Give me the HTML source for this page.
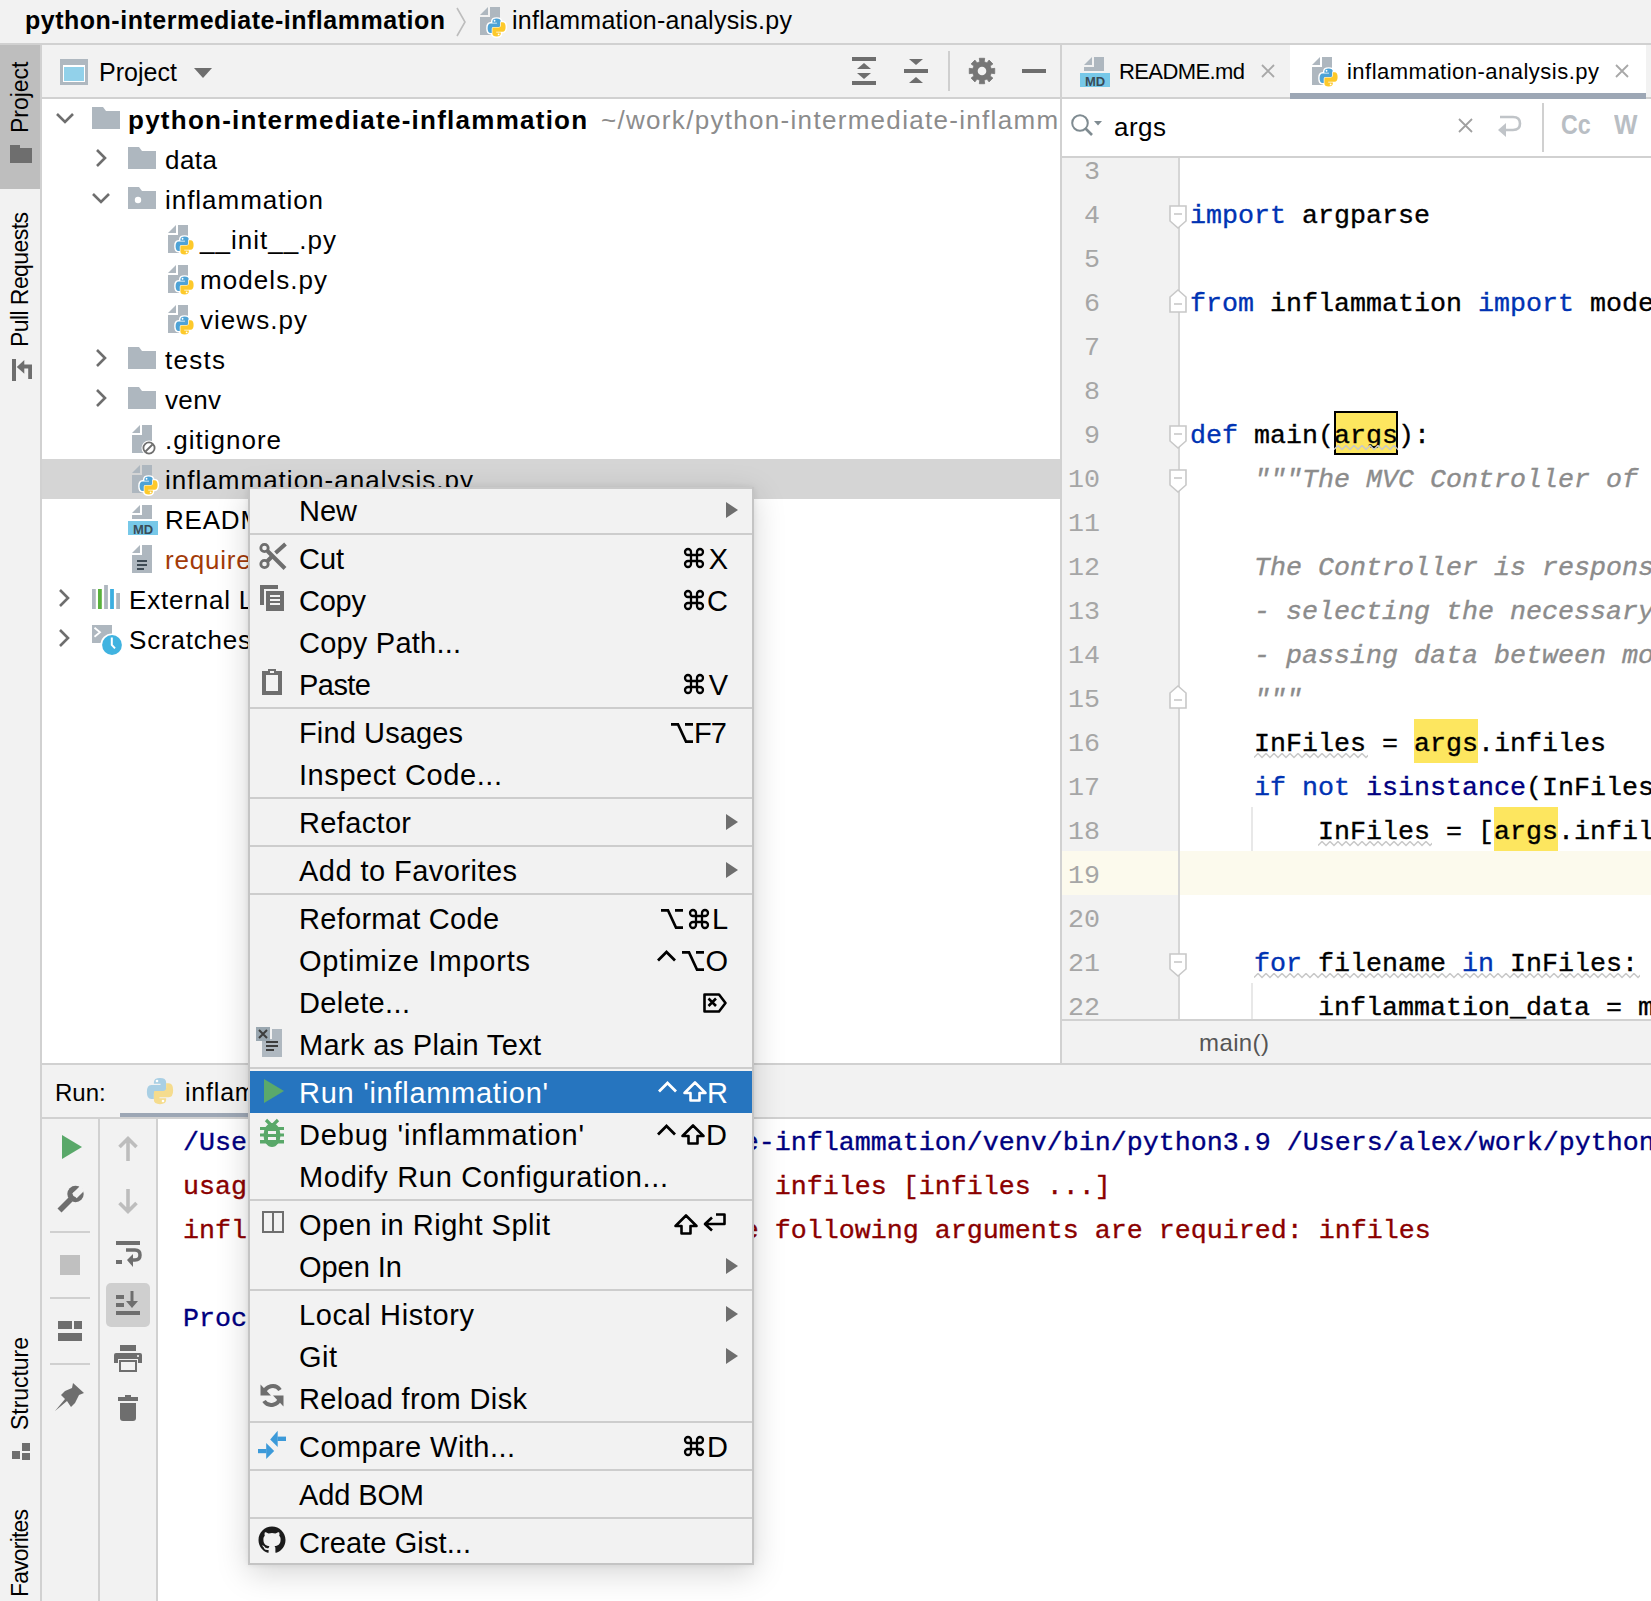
<!DOCTYPE html><html><head><meta charset="utf-8"><style>html,body{margin:0;padding:0;}body{width:1651px;height:1601px;overflow:hidden;position:relative;background:#F2F2F2;font-family:"Liberation Sans",sans-serif;}</style></head><body><div style="position:absolute;left:25px;top:7.84px;font-family:'Liberation Sans', sans-serif;font-size:25px;line-height:25px;color:#000;font-weight:bold;font-style:normal;letter-spacing:0.509px;white-space:pre;">python-intermediate-inflammation</div><svg style="position:absolute;left:455px;top:7px;overflow:visible;" width="12" height="30" viewBox="0 0 12 30"><path d="M2 1L10 15L2 29" fill="none" stroke="#BDBDBD" stroke-width="1.6"/></svg><svg style="position:absolute;left:480px;top:7px;overflow:visible;" width="28" height="31" viewBox="0 0 28 31"><path d="M10 0H20V28H0V10H10Z" fill="#AEB7BF"/><path d="M0 8L8 0V8Z" fill="#AEB7BF"/><g transform="translate(7,11) scale(1.2)"><path d="M4.5 3Q4.5 0.5 8 0.5Q11.5 0.5 11.5 3V7.2Q11.5 8 10.7 8H6.3Q4.5 8 4.5 9.8V12.5H3Q0.5 12.5 0.5 8.5Q0.5 4.5 3 4.5H8.3V3.9H4.5Z" fill="#fff" stroke="#fff" stroke-width="2.4" stroke-linejoin="round"/><path d="M4.5 3Q4.5 0.5 8 0.5Q11.5 0.5 11.5 3V7.2Q11.5 8 10.7 8H6.3Q4.5 8 4.5 9.8V12.5H3Q0.5 12.5 0.5 8.5Q0.5 4.5 3 4.5H8.3V3.9H4.5Z" transform="rotate(180 8 8)" fill="#fff" stroke="#fff" stroke-width="2.4" stroke-linejoin="round"/><path d="M4.5 3Q4.5 0.5 8 0.5Q11.5 0.5 11.5 3V7.2Q11.5 8 10.7 8H6.3Q4.5 8 4.5 9.8V12.5H3Q0.5 12.5 0.5 8.5Q0.5 4.5 3 4.5H8.3V3.9H4.5Z" fill="#4EA3D6"/><path d="M4.5 3Q4.5 0.5 8 0.5Q11.5 0.5 11.5 3V7.2Q11.5 8 10.7 8H6.3Q4.5 8 4.5 9.8V12.5H3Q0.5 12.5 0.5 8.5Q0.5 4.5 3 4.5H8.3V3.9H4.5Z" transform="rotate(180 8 8)" fill="#fff" stroke="#fff" stroke-width="1.1"/><path d="M4.5 3Q4.5 0.5 8 0.5Q11.5 0.5 11.5 3V7.2Q11.5 8 10.7 8H6.3Q4.5 8 4.5 9.8V12.5H3Q0.5 12.5 0.5 8.5Q0.5 4.5 3 4.5H8.3V3.9H4.5Z" transform="rotate(180 8 8)" fill="#FDC92A"/><circle cx="6.3" cy="2.3" r="0.75" fill="#fff"/><circle cx="9.7" cy="13.7" r="0.75" fill="#fff"/></g></svg><div style="position:absolute;left:512px;top:7.84px;font-family:'Liberation Sans', sans-serif;font-size:25px;line-height:25px;color:#000;font-weight:normal;font-style:normal;letter-spacing:0.272px;white-space:pre;">inflammation-analysis.py</div><div style="position:absolute;left:0px;top:43px;width:1651px;height:2px;background:#D1D1D1;"></div><div style="position:absolute;left:40px;top:45px;width:2px;height:1556px;background:#D1D1D1;"></div><div style="position:absolute;left:0px;top:45px;width:40px;height:144px;background:#BEBEBE;"></div><div style="position:absolute;left:9.03px;top:132.5px;transform-origin:0 0;transform:rotate(-90deg);font-family:'Liberation Sans', sans-serif;font-size:23px;line-height:23px;color:#000;letter-spacing:-0.016px;white-space:pre;">Project</div><svg style="position:absolute;left:10px;top:145px;overflow:visible;" width="22" height="18" viewBox="0 0 22 18"><path d="M0 0H10V3H22V18H0Z" fill="#6E6E6E"/></svg><div style="position:absolute;left:9.03px;top:347px;transform-origin:0 0;transform:rotate(-90deg);font-family:'Liberation Sans', sans-serif;font-size:23px;line-height:23px;color:#000;letter-spacing:-0.578px;white-space:pre;">Pull Requests</div><svg style="position:absolute;left:12px;top:359px;overflow:visible;" width="20" height="22" viewBox="0 0 20 22"><rect x="0" y="0" width="4" height="22" fill="#6E6E6E"/><path d="M4.8 8L12.3 1V5.5H20V20H16.2V9.5H12.3V14.7Z" fill="#6E6E6E"/></svg><div style="position:absolute;left:9.03px;top:1430px;transform-origin:0 0;transform:rotate(-90deg);font-family:'Liberation Sans', sans-serif;font-size:23px;line-height:23px;color:#000;letter-spacing:-0.041px;white-space:pre;">Structure</div><svg style="position:absolute;left:12px;top:1443px;overflow:visible;" width="18" height="17" viewBox="0 0 18 17"><rect x="0" y="8" width="8" height="8" fill="#6E6E6E"/><rect x="10" y="0" width="8" height="8" fill="#6E6E6E"/><rect x="10" y="10" width="8" height="7" fill="#6E6E6E"/></svg><div style="position:absolute;left:9.03px;top:1597px;transform-origin:0 0;transform:rotate(-90deg);font-family:'Liberation Sans', sans-serif;font-size:23px;line-height:23px;color:#000;letter-spacing:-0.824px;white-space:pre;">Favorites</div><div style="position:absolute;left:42px;top:45px;width:1018px;height:52px;background:#F2F2F2;"></div><svg style="position:absolute;left:60px;top:59px;overflow:visible;" width="28" height="26" viewBox="0 0 28 26"><rect x="0" y="0" width="28" height="26" fill="#AFB8C0"/><rect x="3" y="6" width="22" height="17" fill="#fff"/><rect x="4" y="8" width="20" height="14" fill="#92D1EA"/></svg><div style="position:absolute;left:99px;top:59.84px;font-family:'Liberation Sans', sans-serif;font-size:25px;line-height:25px;color:#000;font-weight:normal;font-style:normal;letter-spacing:0.031px;white-space:pre;">Project</div><svg style="position:absolute;left:193px;top:67px;overflow:visible;" width="20" height="12" viewBox="0 0 20 12"><path d="M1 1H19L10 11Z" fill="#6E6E6E"/></svg><svg style="position:absolute;left:852px;top:57px;overflow:visible;" width="24" height="28" viewBox="0 0 24 28"><rect x="0" y="0" width="24" height="4" fill="#6E6E6E"/><rect x="0" y="24" width="24" height="4" fill="#6E6E6E"/><path d="M5 12L12 6L19 12Z" fill="#6E6E6E"/><path d="M5 16L12 22L19 16Z" fill="#6E6E6E"/></svg><svg style="position:absolute;left:904px;top:59px;overflow:visible;" width="24" height="24" viewBox="0 0 24 24"><rect x="0" y="10" width="24" height="4" fill="#6E6E6E"/><path d="M5 0H19L12 6Z" fill="#6E6E6E"/><path d="M5 24H19L12 18Z" fill="#6E6E6E"/></svg><div style="position:absolute;left:948px;top:51px;width:2px;height:40px;background:#CFCFCF;"></div><svg style="position:absolute;left:970px;top:58px;overflow:visible;" width="24" height="26" viewBox="0 0 24 26"><path d="M24.72 10.30L24.72 15.70L21.24 15.22L20.10 17.96L22.90 20.08L19.08 23.90L16.96 21.10L14.22 22.24L14.70 25.72L9.30 25.72L9.78 22.24L7.04 21.10L4.92 23.90L1.10 20.08L3.90 17.96L2.76 15.22L-0.72 15.70L-0.72 10.30L2.76 10.78L3.90 8.04L1.10 5.92L4.92 2.10L7.04 4.90L9.78 3.76L9.30 0.28L14.70 0.28L14.22 3.76L16.96 4.90L19.08 2.10L22.90 5.92L20.10 8.04L21.24 10.78Z" fill="#767676" stroke="#767676" stroke-width="0.8" stroke-linejoin="round"/><circle cx="12" cy="13" r="4.3" fill="#F2F2F2"/></svg><div style="position:absolute;left:1022px;top:69px;width:24px;height:4px;background:#6E6E6E;"></div><div style="position:absolute;left:42px;top:97px;width:1018px;height:2px;background:#D1D1D1;"></div><div style="position:absolute;left:42px;top:99px;width:1018px;height:964px;background:#fff;"></div><div style="position:absolute;left:42px;top:459px;width:1018px;height:40px;background:#D5D5D5;"></div><svg style="position:absolute;left:56px;top:113px;overflow:visible;" width="18" height="10" viewBox="0 0 18 10"><path d="M1 1L9 9L17 1" fill="none" stroke="#6E6E6E" stroke-width="2.6"/></svg><svg style="position:absolute;left:92px;top:107px;overflow:visible;" width="28" height="22" viewBox="0 0 28 22"><path d="M0 0H11L14 4H28V22H0Z" fill="#AEB7BF"/></svg><div style="position:absolute;left:128px;top:106.99px;font-family:'Liberation Sans', sans-serif;font-size:26px;line-height:26px;color:#000;font-weight:bold;font-style:normal;letter-spacing:1.251px;white-space:pre;">python-intermediate-inflammation</div><div style="position:absolute;left:601px;top:106.99px;font-family:'Liberation Sans', sans-serif;font-size:26px;line-height:26px;color:#8C8C8C;font-weight:normal;font-style:normal;letter-spacing:1.306px;white-space:pre;">~/work/python-intermediate-inflammation</div><svg style="position:absolute;left:96px;top:149px;overflow:visible;" width="10" height="18" viewBox="0 0 10 18"><path d="M1 1L9 9L1 17" fill="none" stroke="#6E6E6E" stroke-width="2.6"/></svg><svg style="position:absolute;left:128px;top:147px;overflow:visible;" width="28" height="22" viewBox="0 0 28 22"><path d="M0 0H11L14 4H28V22H0Z" fill="#AEB7BF"/></svg><div style="position:absolute;left:165px;top:146.99px;font-family:'Liberation Sans', sans-serif;font-size:26px;line-height:26px;color:#000;font-weight:normal;font-style:normal;letter-spacing:0.474px;white-space:pre;">data</div><svg style="position:absolute;left:92px;top:193px;overflow:visible;" width="18" height="10" viewBox="0 0 18 10"><path d="M1 1L9 9L17 1" fill="none" stroke="#6E6E6E" stroke-width="2.6"/></svg><svg style="position:absolute;left:128px;top:187px;overflow:visible;" width="28" height="22" viewBox="0 0 28 22"><path d="M0 0H11L14 4H28V22H0Z" fill="#AEB7BF"/><circle cx="10" cy="13" r="3.2" fill="#fff"/></svg><div style="position:absolute;left:165px;top:186.99px;font-family:'Liberation Sans', sans-serif;font-size:26px;line-height:26px;color:#000;font-weight:normal;font-style:normal;letter-spacing:0.967px;white-space:pre;">inflammation</div><svg style="position:absolute;left:168px;top:225px;overflow:visible;" width="28" height="31" viewBox="0 0 28 31"><path d="M10 0H20V28H0V10H10Z" fill="#AEB7BF"/><path d="M0 8L8 0V8Z" fill="#AEB7BF"/><g transform="translate(7,11) scale(1.2)"><path d="M4.5 3Q4.5 0.5 8 0.5Q11.5 0.5 11.5 3V7.2Q11.5 8 10.7 8H6.3Q4.5 8 4.5 9.8V12.5H3Q0.5 12.5 0.5 8.5Q0.5 4.5 3 4.5H8.3V3.9H4.5Z" fill="#fff" stroke="#fff" stroke-width="2.4" stroke-linejoin="round"/><path d="M4.5 3Q4.5 0.5 8 0.5Q11.5 0.5 11.5 3V7.2Q11.5 8 10.7 8H6.3Q4.5 8 4.5 9.8V12.5H3Q0.5 12.5 0.5 8.5Q0.5 4.5 3 4.5H8.3V3.9H4.5Z" transform="rotate(180 8 8)" fill="#fff" stroke="#fff" stroke-width="2.4" stroke-linejoin="round"/><path d="M4.5 3Q4.5 0.5 8 0.5Q11.5 0.5 11.5 3V7.2Q11.5 8 10.7 8H6.3Q4.5 8 4.5 9.8V12.5H3Q0.5 12.5 0.5 8.5Q0.5 4.5 3 4.5H8.3V3.9H4.5Z" fill="#4EA3D6"/><path d="M4.5 3Q4.5 0.5 8 0.5Q11.5 0.5 11.5 3V7.2Q11.5 8 10.7 8H6.3Q4.5 8 4.5 9.8V12.5H3Q0.5 12.5 0.5 8.5Q0.5 4.5 3 4.5H8.3V3.9H4.5Z" transform="rotate(180 8 8)" fill="#fff" stroke="#fff" stroke-width="1.1"/><path d="M4.5 3Q4.5 0.5 8 0.5Q11.5 0.5 11.5 3V7.2Q11.5 8 10.7 8H6.3Q4.5 8 4.5 9.8V12.5H3Q0.5 12.5 0.5 8.5Q0.5 4.5 3 4.5H8.3V3.9H4.5Z" transform="rotate(180 8 8)" fill="#FDC92A"/><circle cx="6.3" cy="2.3" r="0.75" fill="#fff"/><circle cx="9.7" cy="13.7" r="0.75" fill="#fff"/></g></svg><div style="position:absolute;left:200px;top:226.99px;font-family:'Liberation Sans', sans-serif;font-size:26px;line-height:26px;color:#000;font-weight:normal;font-style:normal;letter-spacing:1.028px;white-space:pre;">__init__.py</div><svg style="position:absolute;left:168px;top:265px;overflow:visible;" width="28" height="31" viewBox="0 0 28 31"><path d="M10 0H20V28H0V10H10Z" fill="#AEB7BF"/><path d="M0 8L8 0V8Z" fill="#AEB7BF"/><g transform="translate(7,11) scale(1.2)"><path d="M4.5 3Q4.5 0.5 8 0.5Q11.5 0.5 11.5 3V7.2Q11.5 8 10.7 8H6.3Q4.5 8 4.5 9.8V12.5H3Q0.5 12.5 0.5 8.5Q0.5 4.5 3 4.5H8.3V3.9H4.5Z" fill="#fff" stroke="#fff" stroke-width="2.4" stroke-linejoin="round"/><path d="M4.5 3Q4.5 0.5 8 0.5Q11.5 0.5 11.5 3V7.2Q11.5 8 10.7 8H6.3Q4.5 8 4.5 9.8V12.5H3Q0.5 12.5 0.5 8.5Q0.5 4.5 3 4.5H8.3V3.9H4.5Z" transform="rotate(180 8 8)" fill="#fff" stroke="#fff" stroke-width="2.4" stroke-linejoin="round"/><path d="M4.5 3Q4.5 0.5 8 0.5Q11.5 0.5 11.5 3V7.2Q11.5 8 10.7 8H6.3Q4.5 8 4.5 9.8V12.5H3Q0.5 12.5 0.5 8.5Q0.5 4.5 3 4.5H8.3V3.9H4.5Z" fill="#4EA3D6"/><path d="M4.5 3Q4.5 0.5 8 0.5Q11.5 0.5 11.5 3V7.2Q11.5 8 10.7 8H6.3Q4.5 8 4.5 9.8V12.5H3Q0.5 12.5 0.5 8.5Q0.5 4.5 3 4.5H8.3V3.9H4.5Z" transform="rotate(180 8 8)" fill="#fff" stroke="#fff" stroke-width="1.1"/><path d="M4.5 3Q4.5 0.5 8 0.5Q11.5 0.5 11.5 3V7.2Q11.5 8 10.7 8H6.3Q4.5 8 4.5 9.8V12.5H3Q0.5 12.5 0.5 8.5Q0.5 4.5 3 4.5H8.3V3.9H4.5Z" transform="rotate(180 8 8)" fill="#FDC92A"/><circle cx="6.3" cy="2.3" r="0.75" fill="#fff"/><circle cx="9.7" cy="13.7" r="0.75" fill="#fff"/></g></svg><div style="position:absolute;left:200px;top:266.99px;font-family:'Liberation Sans', sans-serif;font-size:26px;line-height:26px;color:#000;font-weight:normal;font-style:normal;letter-spacing:1.066px;white-space:pre;">models.py</div><svg style="position:absolute;left:168px;top:305px;overflow:visible;" width="28" height="31" viewBox="0 0 28 31"><path d="M10 0H20V28H0V10H10Z" fill="#AEB7BF"/><path d="M0 8L8 0V8Z" fill="#AEB7BF"/><g transform="translate(7,11) scale(1.2)"><path d="M4.5 3Q4.5 0.5 8 0.5Q11.5 0.5 11.5 3V7.2Q11.5 8 10.7 8H6.3Q4.5 8 4.5 9.8V12.5H3Q0.5 12.5 0.5 8.5Q0.5 4.5 3 4.5H8.3V3.9H4.5Z" fill="#fff" stroke="#fff" stroke-width="2.4" stroke-linejoin="round"/><path d="M4.5 3Q4.5 0.5 8 0.5Q11.5 0.5 11.5 3V7.2Q11.5 8 10.7 8H6.3Q4.5 8 4.5 9.8V12.5H3Q0.5 12.5 0.5 8.5Q0.5 4.5 3 4.5H8.3V3.9H4.5Z" transform="rotate(180 8 8)" fill="#fff" stroke="#fff" stroke-width="2.4" stroke-linejoin="round"/><path d="M4.5 3Q4.5 0.5 8 0.5Q11.5 0.5 11.5 3V7.2Q11.5 8 10.7 8H6.3Q4.5 8 4.5 9.8V12.5H3Q0.5 12.5 0.5 8.5Q0.5 4.5 3 4.5H8.3V3.9H4.5Z" fill="#4EA3D6"/><path d="M4.5 3Q4.5 0.5 8 0.5Q11.5 0.5 11.5 3V7.2Q11.5 8 10.7 8H6.3Q4.5 8 4.5 9.8V12.5H3Q0.5 12.5 0.5 8.5Q0.5 4.5 3 4.5H8.3V3.9H4.5Z" transform="rotate(180 8 8)" fill="#fff" stroke="#fff" stroke-width="1.1"/><path d="M4.5 3Q4.5 0.5 8 0.5Q11.5 0.5 11.5 3V7.2Q11.5 8 10.7 8H6.3Q4.5 8 4.5 9.8V12.5H3Q0.5 12.5 0.5 8.5Q0.5 4.5 3 4.5H8.3V3.9H4.5Z" transform="rotate(180 8 8)" fill="#FDC92A"/><circle cx="6.3" cy="2.3" r="0.75" fill="#fff"/><circle cx="9.7" cy="13.7" r="0.75" fill="#fff"/></g></svg><div style="position:absolute;left:200px;top:306.99px;font-family:'Liberation Sans', sans-serif;font-size:26px;line-height:26px;color:#000;font-weight:normal;font-style:normal;letter-spacing:1.045px;white-space:pre;">views.py</div><svg style="position:absolute;left:96px;top:349px;overflow:visible;" width="10" height="18" viewBox="0 0 10 18"><path d="M1 1L9 9L1 17" fill="none" stroke="#6E6E6E" stroke-width="2.6"/></svg><svg style="position:absolute;left:128px;top:347px;overflow:visible;" width="28" height="22" viewBox="0 0 28 22"><path d="M0 0H11L14 4H28V22H0Z" fill="#AEB7BF"/></svg><div style="position:absolute;left:165px;top:346.99px;font-family:'Liberation Sans', sans-serif;font-size:26px;line-height:26px;color:#000;font-weight:normal;font-style:normal;letter-spacing:1.277px;white-space:pre;">tests</div><svg style="position:absolute;left:96px;top:389px;overflow:visible;" width="10" height="18" viewBox="0 0 10 18"><path d="M1 1L9 9L1 17" fill="none" stroke="#6E6E6E" stroke-width="2.6"/></svg><svg style="position:absolute;left:128px;top:387px;overflow:visible;" width="28" height="22" viewBox="0 0 28 22"><path d="M0 0H11L14 4H28V22H0Z" fill="#AEB7BF"/></svg><div style="position:absolute;left:165px;top:386.99px;font-family:'Liberation Sans', sans-serif;font-size:26px;line-height:26px;color:#000;font-weight:normal;font-style:normal;letter-spacing:0.365px;white-space:pre;">venv</div><svg style="position:absolute;left:132px;top:425px;overflow:visible;" width="26" height="32" viewBox="0 0 26 32"><path d="M10 0H20V28H0V10H10Z" fill="#AEB7BF"/><path d="M0 8L8 0V8Z" fill="#AEB7BF"/><circle cx="17" cy="23" r="7.5" fill="#fff"/><circle cx="17" cy="23" r="5.6" fill="none" stroke="#6E6E6E" stroke-width="1.8"/><path d="M13.5 26.5L20.5 19.5" stroke="#6E6E6E" stroke-width="1.8"/></svg><div style="position:absolute;left:165px;top:426.99px;font-family:'Liberation Sans', sans-serif;font-size:26px;line-height:26px;color:#000;font-weight:normal;font-style:normal;letter-spacing:1.009px;white-space:pre;">.gitignore</div><svg style="position:absolute;left:132px;top:465px;overflow:visible;" width="28" height="31" viewBox="0 0 28 31"><path d="M10 0H20V28H0V10H10Z" fill="#AEB7BF"/><path d="M0 8L8 0V8Z" fill="#AEB7BF"/><g transform="translate(7,11) scale(1.2)"><path d="M4.5 3Q4.5 0.5 8 0.5Q11.5 0.5 11.5 3V7.2Q11.5 8 10.7 8H6.3Q4.5 8 4.5 9.8V12.5H3Q0.5 12.5 0.5 8.5Q0.5 4.5 3 4.5H8.3V3.9H4.5Z" fill="#fff" stroke="#fff" stroke-width="2.4" stroke-linejoin="round"/><path d="M4.5 3Q4.5 0.5 8 0.5Q11.5 0.5 11.5 3V7.2Q11.5 8 10.7 8H6.3Q4.5 8 4.5 9.8V12.5H3Q0.5 12.5 0.5 8.5Q0.5 4.5 3 4.5H8.3V3.9H4.5Z" transform="rotate(180 8 8)" fill="#fff" stroke="#fff" stroke-width="2.4" stroke-linejoin="round"/><path d="M4.5 3Q4.5 0.5 8 0.5Q11.5 0.5 11.5 3V7.2Q11.5 8 10.7 8H6.3Q4.5 8 4.5 9.8V12.5H3Q0.5 12.5 0.5 8.5Q0.5 4.5 3 4.5H8.3V3.9H4.5Z" fill="#4EA3D6"/><path d="M4.5 3Q4.5 0.5 8 0.5Q11.5 0.5 11.5 3V7.2Q11.5 8 10.7 8H6.3Q4.5 8 4.5 9.8V12.5H3Q0.5 12.5 0.5 8.5Q0.5 4.5 3 4.5H8.3V3.9H4.5Z" transform="rotate(180 8 8)" fill="#fff" stroke="#fff" stroke-width="1.1"/><path d="M4.5 3Q4.5 0.5 8 0.5Q11.5 0.5 11.5 3V7.2Q11.5 8 10.7 8H6.3Q4.5 8 4.5 9.8V12.5H3Q0.5 12.5 0.5 8.5Q0.5 4.5 3 4.5H8.3V3.9H4.5Z" transform="rotate(180 8 8)" fill="#FDC92A"/><circle cx="6.3" cy="2.3" r="0.75" fill="#fff"/><circle cx="9.7" cy="13.7" r="0.75" fill="#fff"/></g></svg><div style="position:absolute;left:165px;top:466.99px;font-family:'Liberation Sans', sans-serif;font-size:26px;line-height:26px;color:#000;font-weight:normal;font-style:normal;letter-spacing:1.017px;white-space:pre;">inflammation-analysis.py</div><svg style="position:absolute;left:128px;top:505px;overflow:visible;" width="30" height="30" viewBox="0 0 30 30"><g transform="translate(4,0)"><path d="M10 0H20V14H0V10H10Z" fill="#AEB7BF"/><path d="M0 8L8 0V8Z" fill="#AEB7BF"/></g><rect x="0" y="16" width="30" height="14" fill="#77C8E8"/><text x="15" y="28.5" text-anchor="middle" font-family="Liberation Sans" font-weight="bold" font-size="13" fill="#3A4C58">MD</text></svg><div style="position:absolute;left:165px;top:506.99px;font-family:'Liberation Sans', sans-serif;font-size:26px;line-height:26px;color:#000;font-weight:normal;font-style:normal;letter-spacing:0.800px;white-space:pre;">README.md</div><svg style="position:absolute;left:132px;top:545px;overflow:visible;" width="20" height="28" viewBox="0 0 20 28"><path d="M10 0H20V28H0V10H10Z" fill="#AEB7BF"/><path d="M0 8L8 0V8Z" fill="#AEB7BF"/><rect x="5" y="15" width="10" height="2" fill="#3D4A54"/><rect x="5" y="19" width="10" height="2" fill="#3D4A54"/><rect x="5" y="23" width="7" height="2" fill="#3D4A54"/></svg><div style="position:absolute;left:165px;top:546.99px;font-family:'Liberation Sans', sans-serif;font-size:26px;line-height:26px;color:#A33B08;font-weight:normal;font-style:normal;letter-spacing:0.800px;white-space:pre;">requirements.txt</div><svg style="position:absolute;left:59px;top:589px;overflow:visible;" width="10" height="18" viewBox="0 0 10 18"><path d="M1 1L9 9L1 17" fill="none" stroke="#6E6E6E" stroke-width="2.6"/></svg><svg style="position:absolute;left:92px;top:585px;overflow:visible;" width="28" height="24" viewBox="0 0 28 24"><rect x="0" y="4" width="3.8" height="20" fill="#AEB7BF"/><rect x="6" y="4" width="3.8" height="20" fill="#59B13D"/><rect x="12.1" y="0" width="3.8" height="24" fill="#AEB7BF"/><rect x="18.1" y="4" width="3.8" height="20" fill="#3BAEE0"/><rect x="24.2" y="8" width="3.8" height="16" fill="#AEB7BF"/></svg><div style="position:absolute;left:129px;top:586.99px;font-family:'Liberation Sans', sans-serif;font-size:26px;line-height:26px;color:#000;font-weight:normal;font-style:normal;letter-spacing:0.800px;white-space:pre;">External Libraries</div><svg style="position:absolute;left:59px;top:629px;overflow:visible;" width="10" height="18" viewBox="0 0 10 18"><path d="M1 1L9 9L1 17" fill="none" stroke="#6E6E6E" stroke-width="2.6"/></svg><svg style="position:absolute;left:92px;top:625px;overflow:visible;" width="32" height="32" viewBox="0 0 32 32"><path d="M0 0H20V18H0Z" fill="#AEB7BF"/><path d="M2.5 2.8L8 7.3L2.5 11.8" fill="none" stroke="#fff" stroke-width="1.8"/><circle cx="20" cy="20" r="11.6" fill="#fff"/><circle cx="20" cy="20" r="9.9" fill="#40B3E0"/><path d="M19.8 12.5V19.8L23 23.3" fill="none" stroke="#fff" stroke-width="2"/></svg><div style="position:absolute;left:129px;top:626.99px;font-family:'Liberation Sans', sans-serif;font-size:26px;line-height:26px;color:#000;font-weight:normal;font-style:normal;letter-spacing:0.800px;white-space:pre;">Scratches and Consoles</div><div style="position:absolute;left:1060px;top:45px;width:2px;height:1018px;background:#D1D1D1;"></div><div style="position:absolute;left:1062px;top:45px;width:589px;height:52px;background:#F2F2F2;"></div><svg style="position:absolute;left:1080px;top:57px;overflow:visible;" width="30" height="30" viewBox="0 0 30 30"><g transform="translate(4,0)"><path d="M10 0H20V14H0V10H10Z" fill="#AEB7BF"/><path d="M0 8L8 0V8Z" fill="#AEB7BF"/></g><rect x="0" y="16" width="30" height="14" fill="#77C8E8"/><text x="15" y="28.5" text-anchor="middle" font-family="Liberation Sans" font-weight="bold" font-size="13" fill="#3A4C58">MD</text></svg><div style="position:absolute;left:1119px;top:60.88px;font-family:'Liberation Sans', sans-serif;font-size:22px;line-height:22px;color:#000;font-weight:normal;font-style:normal;letter-spacing:-0.600px;white-space:pre;">README.md</div><svg style="position:absolute;left:1261px;top:64px;overflow:visible;" width="14" height="14" viewBox="0 0 14 14"><path d="M1 1L13 13M13 1L1 13" stroke="#A8A8A8" stroke-width="1.8"/></svg><div style="position:absolute;left:1290px;top:45px;width:356px;height:54px;background:#fff;"></div><svg style="position:absolute;left:1312px;top:57px;overflow:visible;" width="28" height="31" viewBox="0 0 28 31"><path d="M10 0H20V28H0V10H10Z" fill="#AEB7BF"/><path d="M0 8L8 0V8Z" fill="#AEB7BF"/><g transform="translate(7,11) scale(1.2)"><path d="M4.5 3Q4.5 0.5 8 0.5Q11.5 0.5 11.5 3V7.2Q11.5 8 10.7 8H6.3Q4.5 8 4.5 9.8V12.5H3Q0.5 12.5 0.5 8.5Q0.5 4.5 3 4.5H8.3V3.9H4.5Z" fill="#fff" stroke="#fff" stroke-width="2.4" stroke-linejoin="round"/><path d="M4.5 3Q4.5 0.5 8 0.5Q11.5 0.5 11.5 3V7.2Q11.5 8 10.7 8H6.3Q4.5 8 4.5 9.8V12.5H3Q0.5 12.5 0.5 8.5Q0.5 4.5 3 4.5H8.3V3.9H4.5Z" transform="rotate(180 8 8)" fill="#fff" stroke="#fff" stroke-width="2.4" stroke-linejoin="round"/><path d="M4.5 3Q4.5 0.5 8 0.5Q11.5 0.5 11.5 3V7.2Q11.5 8 10.7 8H6.3Q4.5 8 4.5 9.8V12.5H3Q0.5 12.5 0.5 8.5Q0.5 4.5 3 4.5H8.3V3.9H4.5Z" fill="#4EA3D6"/><path d="M4.5 3Q4.5 0.5 8 0.5Q11.5 0.5 11.5 3V7.2Q11.5 8 10.7 8H6.3Q4.5 8 4.5 9.8V12.5H3Q0.5 12.5 0.5 8.5Q0.5 4.5 3 4.5H8.3V3.9H4.5Z" transform="rotate(180 8 8)" fill="#fff" stroke="#fff" stroke-width="1.1"/><path d="M4.5 3Q4.5 0.5 8 0.5Q11.5 0.5 11.5 3V7.2Q11.5 8 10.7 8H6.3Q4.5 8 4.5 9.8V12.5H3Q0.5 12.5 0.5 8.5Q0.5 4.5 3 4.5H8.3V3.9H4.5Z" transform="rotate(180 8 8)" fill="#FDC92A"/><circle cx="6.3" cy="2.3" r="0.75" fill="#fff"/><circle cx="9.7" cy="13.7" r="0.75" fill="#fff"/></g></svg><div style="position:absolute;left:1347px;top:60.88px;font-family:'Liberation Sans', sans-serif;font-size:22px;line-height:22px;color:#000;font-weight:normal;font-style:normal;letter-spacing:0.484px;white-space:pre;">inflammation-analysis.py</div><svg style="position:absolute;left:1615px;top:64px;overflow:visible;" width="14" height="14" viewBox="0 0 14 14"><path d="M1 1L13 13M13 1L1 13" stroke="#A8A8A8" stroke-width="1.8"/></svg><div style="position:absolute;left:1062px;top:97px;width:589px;height:2px;background:#D1D1D1;"></div><div style="position:absolute;left:1290px;top:93px;width:356px;height:6px;background:#9DA7B5;"></div><div style="position:absolute;left:1062px;top:99px;width:589px;height:57px;background:#fff;"></div><svg style="position:absolute;left:1070px;top:113px;overflow:visible;" width="32" height="24" viewBox="0 0 32 24"><circle cx="10" cy="10" r="7.8" fill="none" stroke="#7F8B91" stroke-width="2"/><path d="M15.5 15.5L22 22" stroke="#7F8B91" stroke-width="2.6"/><path d="M24 8H32L28 12.5Z" fill="#7F8B91"/></svg><div style="position:absolute;left:1114px;top:113.99px;font-family:'Liberation Sans', sans-serif;font-size:26px;line-height:26px;color:#000;font-weight:normal;font-style:normal;letter-spacing:0.479px;white-space:pre;">args</div><svg style="position:absolute;left:1458px;top:118px;overflow:visible;" width="15" height="15" viewBox="0 0 15 15"><path d="M1 1L14 14M14 1L1 14" stroke="#A0A0A0" stroke-width="1.8"/></svg><svg style="position:absolute;left:1498px;top:115px;overflow:visible;" width="24" height="22" viewBox="0 0 24 22"><path d="M2 2H15C19.5 2 22 4.5 22 8.5C22 12.5 19.5 15 15 15H6" fill="none" stroke="#C0C4C8" stroke-width="2.6"/><path d="M0 15L8 8V22Z" fill="#C0C4C8"/></svg><div style="position:absolute;left:1542px;top:103px;width:2px;height:49px;background:#D0D0D0;"></div><div style="position:absolute;left:1561px;top:111.64px;font-family:'Liberation Sans', sans-serif;font-size:27px;line-height:27px;color:#B9BEC4;font-weight:bold;font-style:normal;letter-spacing:0.000px;white-space:pre;transform:scaleX(0.86);transform-origin:0 0;">Cc</div><div style="position:absolute;left:1614px;top:111.64px;font-family:'Liberation Sans', sans-serif;font-size:27px;line-height:27px;color:#B9BEC4;font-weight:bold;font-style:normal;letter-spacing:0.000px;white-space:pre;transform:scaleX(0.92);transform-origin:0 0;">W</div><div style="position:absolute;left:1062px;top:156px;width:589px;height:2px;background:#D1D1D1;"></div><div style="position:absolute;left:1062px;top:158px;width:116px;height:861px;background:#F2F2F2;"></div><div style="position:absolute;left:1178px;top:158px;width:2px;height:861px;background:#D6D6D6;"></div><div style="position:absolute;left:1180px;top:158px;width:471px;height:861px;background:#fff;"></div><div style="position:absolute;left:1062px;top:851px;width:116px;height:44px;background:#FCFAED;"></div><div style="position:absolute;left:1180px;top:851px;width:471px;height:44px;background:#FCFAED;"></div><div style="position:absolute;left:1251px;top:807px;width:2px;height:44px;background:#E8E8E8;"></div><div style="position:absolute;left:1251px;top:983px;width:2px;height:36px;background:#E8E8E8;"></div><div style="position:absolute;left:1084.0px;top:158px;height:33px;overflow:hidden;"><div style="position:relative;top:0.56px;font-family:'Liberation Mono', monospace;font-size:26.67px;line-height:26.67px;color:#A6A6A6;white-space:pre;">3</div></div><div style="position:absolute;left:1084.0px;top:202.56px;font-family:'Liberation Mono', monospace;font-size:26.67px;line-height:26.67px;color:#A6A6A6;white-space:pre;">4</div><div style="position:absolute;left:1084.0px;top:246.56px;font-family:'Liberation Mono', monospace;font-size:26.67px;line-height:26.67px;color:#A6A6A6;white-space:pre;">5</div><div style="position:absolute;left:1084.0px;top:290.56px;font-family:'Liberation Mono', monospace;font-size:26.67px;line-height:26.67px;color:#A6A6A6;white-space:pre;">6</div><div style="position:absolute;left:1084.0px;top:334.56px;font-family:'Liberation Mono', monospace;font-size:26.67px;line-height:26.67px;color:#A6A6A6;white-space:pre;">7</div><div style="position:absolute;left:1084.0px;top:378.56px;font-family:'Liberation Mono', monospace;font-size:26.67px;line-height:26.67px;color:#A6A6A6;white-space:pre;">8</div><div style="position:absolute;left:1084.0px;top:422.56px;font-family:'Liberation Mono', monospace;font-size:26.67px;line-height:26.67px;color:#A6A6A6;white-space:pre;">9</div><div style="position:absolute;left:1068.0px;top:466.56px;font-family:'Liberation Mono', monospace;font-size:26.67px;line-height:26.67px;color:#A6A6A6;white-space:pre;">10</div><div style="position:absolute;left:1068.0px;top:510.56px;font-family:'Liberation Mono', monospace;font-size:26.67px;line-height:26.67px;color:#A6A6A6;white-space:pre;">11</div><div style="position:absolute;left:1068.0px;top:554.56px;font-family:'Liberation Mono', monospace;font-size:26.67px;line-height:26.67px;color:#A6A6A6;white-space:pre;">12</div><div style="position:absolute;left:1068.0px;top:598.56px;font-family:'Liberation Mono', monospace;font-size:26.67px;line-height:26.67px;color:#A6A6A6;white-space:pre;">13</div><div style="position:absolute;left:1068.0px;top:642.56px;font-family:'Liberation Mono', monospace;font-size:26.67px;line-height:26.67px;color:#A6A6A6;white-space:pre;">14</div><div style="position:absolute;left:1068.0px;top:686.56px;font-family:'Liberation Mono', monospace;font-size:26.67px;line-height:26.67px;color:#A6A6A6;white-space:pre;">15</div><div style="position:absolute;left:1068.0px;top:730.56px;font-family:'Liberation Mono', monospace;font-size:26.67px;line-height:26.67px;color:#A6A6A6;white-space:pre;">16</div><div style="position:absolute;left:1068.0px;top:774.56px;font-family:'Liberation Mono', monospace;font-size:26.67px;line-height:26.67px;color:#A6A6A6;white-space:pre;">17</div><div style="position:absolute;left:1068.0px;top:818.56px;font-family:'Liberation Mono', monospace;font-size:26.67px;line-height:26.67px;color:#A6A6A6;white-space:pre;">18</div><div style="position:absolute;left:1068.0px;top:862.56px;font-family:'Liberation Mono', monospace;font-size:26.67px;line-height:26.67px;color:#A6A6A6;white-space:pre;">19</div><div style="position:absolute;left:1068.0px;top:906.56px;font-family:'Liberation Mono', monospace;font-size:26.67px;line-height:26.67px;color:#A6A6A6;white-space:pre;">20</div><div style="position:absolute;left:1068.0px;top:950.56px;font-family:'Liberation Mono', monospace;font-size:26.67px;line-height:26.67px;color:#A6A6A6;white-space:pre;">21</div><div style="position:absolute;left:1068.0px;top:994.56px;font-family:'Liberation Mono', monospace;font-size:26.67px;line-height:26.67px;color:#A6A6A6;white-space:pre;">22</div><div style="position:absolute;left:1334.0px;top:411px;width:64.0px;height:44px;background:#FDE65F;box-shadow:inset 0 0 0 2px #000;"></div><div style="position:absolute;left:1414.0px;top:719px;width:64.0px;height:44px;background:#FDE65F;"></div><div style="position:absolute;left:1494.0px;top:807px;width:64.0px;height:44px;background:#FDE65F;"></div><div style="position:absolute;left:1190.0px;top:202.56px;font-family:'Liberation Mono', monospace;font-size:26.67px;line-height:26.67px;color:#0033B3;font-style:normal;white-space:pre;-webkit-text-stroke:0.35px #0033B3;">import</div><div style="position:absolute;left:1286.0px;top:202.56px;font-family:'Liberation Mono', monospace;font-size:26.67px;line-height:26.67px;color:#000;font-style:normal;white-space:pre;-webkit-text-stroke:0.35px #000;"> argparse</div><div style="position:absolute;left:1190.0px;top:290.56px;font-family:'Liberation Mono', monospace;font-size:26.67px;line-height:26.67px;color:#0033B3;font-style:normal;white-space:pre;-webkit-text-stroke:0.35px #0033B3;">from</div><div style="position:absolute;left:1254.0px;top:290.56px;font-family:'Liberation Mono', monospace;font-size:26.67px;line-height:26.67px;color:#000;font-style:normal;white-space:pre;-webkit-text-stroke:0.35px #000;"> inflammation </div><div style="position:absolute;left:1478.0px;top:290.56px;font-family:'Liberation Mono', monospace;font-size:26.67px;line-height:26.67px;color:#0033B3;font-style:normal;white-space:pre;-webkit-text-stroke:0.35px #0033B3;">import</div><div style="position:absolute;left:1574.0px;top:290.56px;font-family:'Liberation Mono', monospace;font-size:26.67px;line-height:26.67px;color:#000;font-style:normal;white-space:pre;-webkit-text-stroke:0.35px #000;"> model</div><div style="position:absolute;left:1190.0px;top:422.56px;font-family:'Liberation Mono', monospace;font-size:26.67px;line-height:26.67px;color:#0033B3;font-style:normal;white-space:pre;-webkit-text-stroke:0.35px #0033B3;">def</div><div style="position:absolute;left:1238.0px;top:422.56px;font-family:'Liberation Mono', monospace;font-size:26.67px;line-height:26.67px;color:#000;font-style:normal;white-space:pre;-webkit-text-stroke:0.35px #000;"> main(args):</div><div style="position:absolute;left:1190.0px;top:466.56px;font-family:'Liberation Mono', monospace;font-size:26.67px;line-height:26.67px;color:#8C8C8C;font-style:italic;white-space:pre;-webkit-text-stroke:0.35px #8C8C8C;">    """The MVC Controller of t</div><div style="position:absolute;left:1190.0px;top:554.56px;font-family:'Liberation Mono', monospace;font-size:26.67px;line-height:26.67px;color:#8C8C8C;font-style:italic;white-space:pre;-webkit-text-stroke:0.35px #8C8C8C;">    The Controller is responsi</div><div style="position:absolute;left:1190.0px;top:598.56px;font-family:'Liberation Mono', monospace;font-size:26.67px;line-height:26.67px;color:#8C8C8C;font-style:italic;white-space:pre;-webkit-text-stroke:0.35px #8C8C8C;">    - selecting the necessary </div><div style="position:absolute;left:1190.0px;top:642.56px;font-family:'Liberation Mono', monospace;font-size:26.67px;line-height:26.67px;color:#8C8C8C;font-style:italic;white-space:pre;-webkit-text-stroke:0.35px #8C8C8C;">    - passing data between mod</div><div style="position:absolute;left:1190.0px;top:686.56px;font-family:'Liberation Mono', monospace;font-size:26.67px;line-height:26.67px;color:#8C8C8C;font-style:italic;white-space:pre;-webkit-text-stroke:0.35px #8C8C8C;">    """</div><div style="position:absolute;left:1190.0px;top:730.56px;font-family:'Liberation Mono', monospace;font-size:26.67px;line-height:26.67px;color:#000;font-style:normal;white-space:pre;-webkit-text-stroke:0.35px #000;">    InFiles = args.infiles</div><div style="position:absolute;left:1190.0px;top:774.56px;font-family:'Liberation Mono', monospace;font-size:26.67px;line-height:26.67px;color:#000;font-style:normal;white-space:pre;-webkit-text-stroke:0.35px #000;">    </div><div style="position:absolute;left:1254.0px;top:774.56px;font-family:'Liberation Mono', monospace;font-size:26.67px;line-height:26.67px;color:#0033B3;font-style:normal;white-space:pre;-webkit-text-stroke:0.35px #0033B3;">if</div><div style="position:absolute;left:1286.0px;top:774.56px;font-family:'Liberation Mono', monospace;font-size:26.67px;line-height:26.67px;color:#000;font-style:normal;white-space:pre;-webkit-text-stroke:0.35px #000;"> </div><div style="position:absolute;left:1302.0px;top:774.56px;font-family:'Liberation Mono', monospace;font-size:26.67px;line-height:26.67px;color:#0033B3;font-style:normal;white-space:pre;-webkit-text-stroke:0.35px #0033B3;">not</div><div style="position:absolute;left:1350.0px;top:774.56px;font-family:'Liberation Mono', monospace;font-size:26.67px;line-height:26.67px;color:#000;font-style:normal;white-space:pre;-webkit-text-stroke:0.35px #000;"> </div><div style="position:absolute;left:1366.0px;top:774.56px;font-family:'Liberation Mono', monospace;font-size:26.67px;line-height:26.67px;color:#000080;font-style:normal;white-space:pre;-webkit-text-stroke:0.35px #000080;">isinstance</div><div style="position:absolute;left:1526.0px;top:774.56px;font-family:'Liberation Mono', monospace;font-size:26.67px;line-height:26.67px;color:#000;font-style:normal;white-space:pre;-webkit-text-stroke:0.35px #000;">(InFiles,</div><div style="position:absolute;left:1190.0px;top:818.56px;font-family:'Liberation Mono', monospace;font-size:26.67px;line-height:26.67px;color:#000;font-style:normal;white-space:pre;-webkit-text-stroke:0.35px #000;">        InFiles = [args.infile</div><div style="position:absolute;left:1190.0px;top:950.56px;font-family:'Liberation Mono', monospace;font-size:26.67px;line-height:26.67px;color:#000;font-style:normal;white-space:pre;-webkit-text-stroke:0.35px #000;">    </div><div style="position:absolute;left:1254.0px;top:950.56px;font-family:'Liberation Mono', monospace;font-size:26.67px;line-height:26.67px;color:#0033B3;font-style:normal;white-space:pre;-webkit-text-stroke:0.35px #0033B3;">for</div><div style="position:absolute;left:1302.0px;top:950.56px;font-family:'Liberation Mono', monospace;font-size:26.67px;line-height:26.67px;color:#000;font-style:normal;white-space:pre;-webkit-text-stroke:0.35px #000;"> filename </div><div style="position:absolute;left:1462.0px;top:950.56px;font-family:'Liberation Mono', monospace;font-size:26.67px;line-height:26.67px;color:#0033B3;font-style:normal;white-space:pre;-webkit-text-stroke:0.35px #0033B3;">in</div><div style="position:absolute;left:1494.0px;top:950.56px;font-family:'Liberation Mono', monospace;font-size:26.67px;line-height:26.67px;color:#000;font-style:normal;white-space:pre;-webkit-text-stroke:0.35px #000;"> InFiles:</div><div style="position:absolute;left:1190.0px;top:994.56px;font-family:'Liberation Mono', monospace;font-size:26.67px;line-height:26.67px;color:#000;font-style:normal;white-space:pre;-webkit-text-stroke:0.35px #000;">        inflammation_data = mo</div><svg style="position:absolute;left:1254px;top:752.5px;overflow:visible;overflow:hidden;" width="114" height="6" viewBox="0 0 114 6"><path d="M0 4.5L4 0.5L8 4.5L12 0.5L16 4.5L20 0.5L24 4.5L28 0.5L32 4.5L36 0.5L40 4.5L44 0.5L48 4.5L52 0.5L56 4.5L60 0.5L64 4.5L68 0.5L72 4.5L76 0.5L80 4.5L84 0.5L88 4.5L92 0.5L96 4.5L100 0.5L104 4.5L108 0.5L112 4.5L116 0.5L120 4.5" fill="none" stroke="#C8C8C8" stroke-width="1.5"/></svg><svg style="position:absolute;left:1318px;top:840.5px;overflow:visible;overflow:hidden;" width="114" height="6" viewBox="0 0 114 6"><path d="M0 4.5L4 0.5L8 4.5L12 0.5L16 4.5L20 0.5L24 4.5L28 0.5L32 4.5L36 0.5L40 4.5L44 0.5L48 4.5L52 0.5L56 4.5L60 0.5L64 4.5L68 0.5L72 4.5L76 0.5L80 4.5L84 0.5L88 4.5L92 0.5L96 4.5L100 0.5L104 4.5L108 0.5L112 4.5L116 0.5L120 4.5" fill="none" stroke="#C8C8C8" stroke-width="1.5"/></svg><svg style="position:absolute;left:1254px;top:972.5px;overflow:visible;overflow:hidden;" width="386" height="6" viewBox="0 0 386 6"><path d="M0 4.5L4 0.5L8 4.5L12 0.5L16 4.5L20 0.5L24 4.5L28 0.5L32 4.5L36 0.5L40 4.5L44 0.5L48 4.5L52 0.5L56 4.5L60 0.5L64 4.5L68 0.5L72 4.5L76 0.5L80 4.5L84 0.5L88 4.5L92 0.5L96 4.5L100 0.5L104 4.5L108 0.5L112 4.5L116 0.5L120 4.5L124 0.5L128 4.5L132 0.5L136 4.5L140 0.5L144 4.5L148 0.5L152 4.5L156 0.5L160 4.5L164 0.5L168 4.5L172 0.5L176 4.5L180 0.5L184 4.5L188 0.5L192 4.5L196 0.5L200 4.5L204 0.5L208 4.5L212 0.5L216 4.5L220 0.5L224 4.5L228 0.5L232 4.5L236 0.5L240 4.5L244 0.5L248 4.5L252 0.5L256 4.5L260 0.5L264 4.5L268 0.5L272 4.5L276 0.5L280 4.5L284 0.5L288 4.5L292 0.5L296 4.5L300 0.5L304 4.5L308 0.5L312 4.5L316 0.5L320 4.5L324 0.5L328 4.5L332 0.5L336 4.5L340 0.5L344 4.5L348 0.5L352 4.5L356 0.5L360 4.5L364 0.5L368 4.5L372 0.5L376 4.5L380 0.5L384 4.5L388 0.5L392 4.5" fill="none" stroke="#C8C8C8" stroke-width="1.5"/></svg><svg style="position:absolute;left:1334px;top:444.5px;overflow:visible;overflow:hidden;" width="64" height="6" viewBox="0 0 64 6"><path d="M0 4.5L4 0.5L8 4.5L12 0.5L16 4.5L20 0.5L24 4.5L28 0.5L32 4.5L36 0.5L40 4.5L44 0.5L48 4.5L52 0.5L56 4.5L60 0.5L64 4.5L68 0.5L72 4.5" fill="none" stroke="#C8C8C8" stroke-width="1.5"/></svg><svg style="position:absolute;left:1169px;top:205px;overflow:visible;" width="18" height="24" viewBox="0 0 18 24"><path d="M1 1H17V16L9 23L1 16Z" fill="#fff" stroke="#C8C8C8" stroke-width="1.6"/><path d="M5 9H13" stroke="#C8C8C8" stroke-width="1.6"/></svg><svg style="position:absolute;left:1169px;top:289px;overflow:visible;" width="18" height="24" viewBox="0 0 18 24"><path d="M1 23H17V8L9 1L1 8Z" fill="#fff" stroke="#C8C8C8" stroke-width="1.6"/><path d="M5 15H13" stroke="#C8C8C8" stroke-width="1.6"/></svg><svg style="position:absolute;left:1169px;top:425px;overflow:visible;" width="18" height="24" viewBox="0 0 18 24"><path d="M1 1H17V16L9 23L1 16Z" fill="#fff" stroke="#C8C8C8" stroke-width="1.6"/><path d="M5 9H13" stroke="#C8C8C8" stroke-width="1.6"/></svg><svg style="position:absolute;left:1169px;top:469px;overflow:visible;" width="18" height="24" viewBox="0 0 18 24"><path d="M1 1H17V16L9 23L1 16Z" fill="#fff" stroke="#C8C8C8" stroke-width="1.6"/><path d="M5 9H13" stroke="#C8C8C8" stroke-width="1.6"/></svg><svg style="position:absolute;left:1169px;top:685px;overflow:visible;" width="18" height="24" viewBox="0 0 18 24"><path d="M1 23H17V8L9 1L1 8Z" fill="#fff" stroke="#C8C8C8" stroke-width="1.6"/><path d="M5 15H13" stroke="#C8C8C8" stroke-width="1.6"/></svg><svg style="position:absolute;left:1169px;top:953px;overflow:visible;" width="18" height="24" viewBox="0 0 18 24"><path d="M1 1H17V16L9 23L1 16Z" fill="#fff" stroke="#C8C8C8" stroke-width="1.6"/><path d="M5 9H13" stroke="#C8C8C8" stroke-width="1.6"/></svg><div style="position:absolute;left:1062px;top:1019px;width:589px;height:2px;background:#D1D1D1;"></div><div style="position:absolute;left:1062px;top:1021px;width:589px;height:42px;background:#F2F2F2;"></div><div style="position:absolute;left:1199px;top:1030.68px;font-family:'Liberation Sans', sans-serif;font-size:24px;line-height:24px;color:#555555;font-weight:normal;font-style:normal;letter-spacing:0.397px;white-space:pre;">main()</div><div style="position:absolute;left:42px;top:1063px;width:1609px;height:2px;background:#D1D1D1;"></div><div style="position:absolute;left:42px;top:1065px;width:1609px;height:52px;background:#F2F2F2;"></div><div style="position:absolute;left:55px;top:1080.68px;font-family:'Liberation Sans', sans-serif;font-size:24px;line-height:24px;color:#000;font-weight:normal;font-style:normal;letter-spacing:0.000px;white-space:pre;">Run:</div><svg style="position:absolute;left:146px;top:1077px;overflow:visible;" width="28" height="28" viewBox="0 0 28 28"><g transform="scale(1.75)"><path d="M4.5 3Q4.5 0.5 8 0.5Q11.5 0.5 11.5 3V7.2Q11.5 8 10.7 8H6.3Q4.5 8 4.5 9.8V12.5H3Q0.5 12.5 0.5 8.5Q0.5 4.5 3 4.5H8.3V3.9H4.5Z" fill="#A9CFE4"/><path d="M4.5 3Q4.5 0.5 8 0.5Q11.5 0.5 11.5 3V7.2Q11.5 8 10.7 8H6.3Q4.5 8 4.5 9.8V12.5H3Q0.5 12.5 0.5 8.5Q0.5 4.5 3 4.5H8.3V3.9H4.5Z" transform="rotate(180 8 8)" fill="#F5DC8E"/><circle cx="6.3" cy="2.3" r="0.75" fill="#fff"/><circle cx="9.7" cy="13.7" r="0.75" fill="#fff"/></g></svg><div style="position:absolute;left:185px;top:1079.84px;font-family:'Liberation Sans', sans-serif;font-size:25px;line-height:25px;color:#000;font-weight:normal;font-style:normal;letter-spacing:0.800px;white-space:pre;">inflammation</div><div style="position:absolute;left:120px;top:1113px;width:400px;height:4px;background:#9DA7B5;"></div><div style="position:absolute;left:42px;top:1117px;width:1609px;height:2px;background:#D1D1D1;"></div><div style="position:absolute;left:42px;top:1119px;width:56px;height:482px;background:#F2F2F2;"></div><div style="position:absolute;left:98px;top:1119px;width:2px;height:482px;background:#D1D1D1;"></div><div style="position:absolute;left:100px;top:1119px;width:56px;height:482px;background:#F2F2F2;"></div><div style="position:absolute;left:156px;top:1119px;width:2px;height:482px;background:#D1D1D1;"></div><div style="position:absolute;left:158px;top:1119px;width:1493px;height:482px;background:#fff;"></div><svg style="position:absolute;left:62px;top:1135px;overflow:visible;" width="20" height="24" viewBox="0 0 20 24"><path d="M0 0L20 12L0 24Z" fill="#59A869"/></svg><svg style="position:absolute;left:56px;top:1185px;overflow:visible;" width="28" height="28" viewBox="0 0 28 28"><path d="M1.5 23.5L12.5 12.5L16.5 16.5L5.5 27.5Z" fill="#6E6E6E"/><circle cx="19.5" cy="9" r="8.2" fill="#6E6E6E"/><path d="M16.2 8.8L24 1L28.5 5.5L20.7 13.3Z" fill="#F2F2F2"/><circle cx="19.5" cy="9" r="2.6" fill="#F2F2F2"/></svg><div style="position:absolute;left:50px;top:1231px;width:40px;height:2px;background:#D0D0D0;"></div><div style="position:absolute;left:60px;top:1255px;width:20px;height:20px;background:#C0C0C0;"></div><div style="position:absolute;left:50px;top:1297px;width:40px;height:2px;background:#D0D0D0;"></div><svg style="position:absolute;left:58px;top:1321px;overflow:visible;" width="24" height="20" viewBox="0 0 24 20"><rect x="0" y="0" width="14" height="8" fill="#6E6E6E"/><rect x="16" y="0" width="8" height="8" fill="#6E6E6E"/><rect x="0" y="12" width="24" height="8" fill="#6E6E6E"/></svg><div style="position:absolute;left:50px;top:1363px;width:40px;height:2px;background:#D0D0D0;"></div><svg style="position:absolute;left:55px;top:1383px;overflow:visible;" width="29" height="28" viewBox="0 0 29 28"><path d="M18 0L29 10L24 12L20 20L16 24L12 18L0 28L10 16L6 12L10 8L17 5Z" fill="#6E6E6E"/></svg><svg style="position:absolute;left:118px;top:1137px;overflow:visible;" width="20" height="24" viewBox="0 0 20 24"><path d="M10 2V24M1.5 10L10 1.5L18.5 10" fill="none" stroke="#BDBDBD" stroke-width="3.6"/></svg><svg style="position:absolute;left:118px;top:1189px;overflow:visible;" width="20" height="24" viewBox="0 0 20 24"><path d="M10 0V22M1.5 14L10 22.5L18.5 14" fill="none" stroke="#BDBDBD" stroke-width="3.6"/></svg><svg style="position:absolute;left:116px;top:1241px;overflow:visible;" width="26" height="28" viewBox="0 0 26 28"><rect x="0" y="0" width="24" height="4" fill="#6E6E6E"/><rect x="0" y="19" width="6" height="4" fill="#6E6E6E"/><path d="M10 9H19C22.5 9 24 11 24 14C24 17 22.5 19 19 19H15" fill="none" stroke="#6E6E6E" stroke-width="3.5"/><path d="M11 19L17 13V26Z" fill="#6E6E6E"/></svg><div style="position:absolute;left:106px;top:1283px;width:44px;height:44px;background:#CFCFCF;border-radius:5px;"></div><svg style="position:absolute;left:116px;top:1291px;overflow:visible;" width="24" height="24" viewBox="0 0 24 24"><rect x="0" y="4" width="8" height="4" fill="#6E6E6E"/><rect x="0" y="12" width="8" height="4" fill="#6E6E6E"/><rect x="0" y="20" width="24" height="4" fill="#6E6E6E"/><path d="M16 0V14" stroke="#6E6E6E" stroke-width="3"/><path d="M10 10L16 17L22 10Z" fill="#6E6E6E"/></svg><svg style="position:absolute;left:114px;top:1345px;overflow:visible;" width="28" height="26" viewBox="0 0 28 26"><rect x="6" y="0" width="16" height="6" fill="#6E6E6E"/><path d="M2 8H26Q28 8 28 10V18H24V14H4V18H0V10Q0 8 2 8Z" fill="#6E6E6E"/><rect x="6" y="16" width="16" height="10" fill="none" stroke="#6E6E6E" stroke-width="2"/><circle cx="24" cy="11" r="1" fill="#fff"/></svg><svg style="position:absolute;left:118px;top:1395px;overflow:visible;" width="20" height="26" viewBox="0 0 20 26"><rect x="7" y="0" width="6" height="3" fill="#6E6E6E"/><rect x="0" y="2" width="20" height="4" fill="#6E6E6E"/><path d="M2 8H18V23Q18 26 15 26H5Q2 26 2 23Z" fill="#6E6E6E"/></svg><div style="position:absolute;left:183px;top:1129.56px;font-family:'Liberation Mono', monospace;font-size:26.67px;line-height:26.67px;color:#000080;white-space:pre;-webkit-text-stroke:0.35px #000080;">/Users/alex/work/python-intermediate-inflammation/venv/bin/python3.9 /Users/alex/work/python-intermediate-inflammation/inflammation-analysis.py</div><div style="position:absolute;left:183px;top:1173.56px;font-family:'Liberation Mono', monospace;font-size:26.67px;line-height:26.67px;color:#8B0000;white-space:pre;-webkit-text-stroke:0.35px #8B0000;">usage: inflammation-analysis.py [-h  infiles [infiles ...]</div><div style="position:absolute;left:183px;top:1217.56px;font-family:'Liberation Mono', monospace;font-size:26.67px;line-height:26.67px;color:#8B0000;white-space:pre;-webkit-text-stroke:0.35px #8B0000;">inflammation-analysis.py: error: the following arguments are required: infiles</div><div style="position:absolute;left:183px;top:1305.56px;font-family:'Liberation Mono', monospace;font-size:26.67px;line-height:26.67px;color:#000080;white-space:pre;-webkit-text-stroke:0.35px #000080;">Process finished with exit code 2</div><div style="position:absolute;left:248px;top:487px;width:506px;height:1078px;background:#F2F2F2;box-shadow:0 0 0 2px #C4C4C4 inset, 0 8px 30px rgba(0,0,0,0.17), 0 0 6px rgba(0,0,0,0.08);"></div><div style="position:absolute;left:248px;top:487px;width:506px;height:2px;background:#C9C9C9;"></div><div style="position:absolute;left:248px;top:1563px;width:506px;height:2px;background:#C4C4C4;"></div><div style="position:absolute;left:248px;top:487px;width:2px;height:1078px;background:#C4C4C4;"></div><div style="position:absolute;left:752px;top:487px;width:2px;height:1078px;background:#C4C4C4;"></div><div style="position:absolute;left:250px;top:533px;width:502px;height:2px;background:#CDCDCD;"></div><div style="position:absolute;left:250px;top:707px;width:502px;height:2px;background:#CDCDCD;"></div><div style="position:absolute;left:250px;top:797px;width:502px;height:2px;background:#CDCDCD;"></div><div style="position:absolute;left:250px;top:845px;width:502px;height:2px;background:#CDCDCD;"></div><div style="position:absolute;left:250px;top:893px;width:502px;height:2px;background:#CDCDCD;"></div><div style="position:absolute;left:250px;top:1067px;width:502px;height:2px;background:#CDCDCD;"></div><div style="position:absolute;left:250px;top:1199px;width:502px;height:2px;background:#CDCDCD;"></div><div style="position:absolute;left:250px;top:1289px;width:502px;height:2px;background:#CDCDCD;"></div><div style="position:absolute;left:250px;top:1421px;width:502px;height:2px;background:#CDCDCD;"></div><div style="position:absolute;left:250px;top:1469px;width:502px;height:2px;background:#CDCDCD;"></div><div style="position:absolute;left:250px;top:1517px;width:502px;height:2px;background:#CDCDCD;"></div><div style="position:absolute;left:299px;top:497.45px;font-family:'Liberation Sans', sans-serif;font-size:29px;line-height:29px;color:#000;font-weight:normal;font-style:normal;letter-spacing:0.000px;white-space:pre;">New</div><svg style="position:absolute;left:726px;top:502px;overflow:visible;" width="12" height="16" viewBox="0 0 12 16"><path d="M0 0L12 8L0 16Z" fill="#6E6E6E"/></svg><div style="position:absolute;left:299px;top:545.45px;font-family:'Liberation Sans', sans-serif;font-size:29px;line-height:29px;color:#000;font-weight:normal;font-style:normal;letter-spacing:-0.062px;white-space:pre;">Cut</div><svg style="position:absolute;left:259px;top:543px;overflow:visible;" width="28" height="28" viewBox="0 0 28 28"><circle cx="5.5" cy="5" r="3.7" fill="none" stroke="#6E6E6E" stroke-width="2.8"/><circle cx="5.5" cy="21" r="3.7" fill="none" stroke="#6E6E6E" stroke-width="2.8"/><path d="M8.5 8L26 25.5" stroke="#6E6E6E" stroke-width="4"/><path d="M8.5 18L13.5 13M16.5 10L26.5 1" stroke="#6E6E6E" stroke-width="4"/></svg><svg style="position:absolute;left:684px;top:548px;overflow:visible;" width="20" height="20" viewBox="0 0 20 20"><path d="M7 7V4A3 3 0 1 0 4 7H16A3 3 0 1 0 13 4V16A3 3 0 1 0 16 13H4A3 3 0 1 0 7 16Z" fill="none" stroke="#000" stroke-width="2.3" stroke-linejoin="round"/></svg><div style="position:absolute;left:708.65625px;top:545.45px;font-family:'Liberation Sans', sans-serif;font-size:29px;line-height:29px;color:#000;font-weight:normal;font-style:normal;letter-spacing:0.000px;white-space:pre;">X</div><div style="position:absolute;left:299px;top:587.45px;font-family:'Liberation Sans', sans-serif;font-size:29px;line-height:29px;color:#000;font-weight:normal;font-style:normal;letter-spacing:-0.229px;white-space:pre;">Copy</div><svg style="position:absolute;left:260px;top:585px;overflow:visible;" width="24" height="26" viewBox="0 0 24 26"><path d="M0 0H18V4H4V20H0Z" fill="#6E6E6E"/><rect x="6" y="6" width="18" height="20" fill="#6E6E6E"/><rect x="10" y="10" width="10" height="2" fill="#F2F2F2"/><rect x="10" y="14" width="10" height="2" fill="#F2F2F2"/><rect x="10" y="18" width="10" height="2" fill="#F2F2F2"/></svg><svg style="position:absolute;left:684px;top:590px;overflow:visible;" width="20" height="20" viewBox="0 0 20 20"><path d="M7 7V4A3 3 0 1 0 4 7H16A3 3 0 1 0 13 4V16A3 3 0 1 0 16 13H4A3 3 0 1 0 7 16Z" fill="none" stroke="#000" stroke-width="2.3" stroke-linejoin="round"/></svg><div style="position:absolute;left:707.0625px;top:587.45px;font-family:'Liberation Sans', sans-serif;font-size:29px;line-height:29px;color:#000;font-weight:normal;font-style:normal;letter-spacing:0.000px;white-space:pre;">C</div><div style="position:absolute;left:299px;top:629.45px;font-family:'Liberation Sans', sans-serif;font-size:29px;line-height:29px;color:#000;font-weight:normal;font-style:normal;letter-spacing:0.219px;white-space:pre;">Copy Path...</div><div style="position:absolute;left:299px;top:671.45px;font-family:'Liberation Sans', sans-serif;font-size:29px;line-height:29px;color:#000;font-weight:normal;font-style:normal;letter-spacing:-0.539px;white-space:pre;">Paste</div><svg style="position:absolute;left:262px;top:669px;overflow:visible;" width="20" height="26" viewBox="0 0 20 26"><rect x="2" y="4" width="16" height="20" fill="none" stroke="#6E6E6E" stroke-width="4"/><rect x="6" y="0" width="8" height="5" fill="#6E6E6E"/><rect x="8" y="2" width="4" height="2" fill="#F2F2F2"/></svg><svg style="position:absolute;left:684px;top:674px;overflow:visible;" width="20" height="20" viewBox="0 0 20 20"><path d="M7 7V4A3 3 0 1 0 4 7H16A3 3 0 1 0 13 4V16A3 3 0 1 0 16 13H4A3 3 0 1 0 7 16Z" fill="none" stroke="#000" stroke-width="2.3" stroke-linejoin="round"/></svg><div style="position:absolute;left:708.65625px;top:671.45px;font-family:'Liberation Sans', sans-serif;font-size:29px;line-height:29px;color:#000;font-weight:normal;font-style:normal;letter-spacing:0.000px;white-space:pre;">V</div><div style="position:absolute;left:299px;top:719.45px;font-family:'Liberation Sans', sans-serif;font-size:29px;line-height:29px;color:#000;font-weight:normal;font-style:normal;letter-spacing:0.122px;white-space:pre;">Find Usages</div><svg style="position:absolute;left:671px;top:723px;overflow:visible;" width="22" height="20" viewBox="0 0 22 20"><path d="M0 1.4H7L15 18.6H22M14 1.4H22" fill="none" stroke="#000" stroke-width="2.6"/></svg><div style="position:absolute;left:694px;top:719.45px;font-family:'Liberation Sans', sans-serif;font-size:29px;line-height:29px;color:#000;font-weight:normal;font-style:normal;letter-spacing:-0.844px;white-space:pre;">F7</div><div style="position:absolute;left:299px;top:761.45px;font-family:'Liberation Sans', sans-serif;font-size:29px;line-height:29px;color:#000;font-weight:normal;font-style:normal;letter-spacing:0.567px;white-space:pre;">Inspect Code...</div><div style="position:absolute;left:299px;top:809.45px;font-family:'Liberation Sans', sans-serif;font-size:29px;line-height:29px;color:#000;font-weight:normal;font-style:normal;letter-spacing:0.344px;white-space:pre;">Refactor</div><svg style="position:absolute;left:726px;top:814px;overflow:visible;" width="12" height="16" viewBox="0 0 12 16"><path d="M0 0L12 8L0 16Z" fill="#6E6E6E"/></svg><div style="position:absolute;left:299px;top:857.45px;font-family:'Liberation Sans', sans-serif;font-size:29px;line-height:29px;color:#000;font-weight:normal;font-style:normal;letter-spacing:0.456px;white-space:pre;">Add to Favorites</div><svg style="position:absolute;left:726px;top:862px;overflow:visible;" width="12" height="16" viewBox="0 0 12 16"><path d="M0 0L12 8L0 16Z" fill="#6E6E6E"/></svg><div style="position:absolute;left:299px;top:905.45px;font-family:'Liberation Sans', sans-serif;font-size:29px;line-height:29px;color:#000;font-weight:normal;font-style:normal;letter-spacing:0.281px;white-space:pre;">Reformat Code</div><svg style="position:absolute;left:661px;top:909px;overflow:visible;" width="22" height="20" viewBox="0 0 22 20"><path d="M0 1.4H7L15 18.6H22M14 1.4H22" fill="none" stroke="#000" stroke-width="2.6"/></svg><svg style="position:absolute;left:689px;top:909px;overflow:visible;" width="20" height="20" viewBox="0 0 20 20"><path d="M7 7V4A3 3 0 1 0 4 7H16A3 3 0 1 0 13 4V16A3 3 0 1 0 16 13H4A3 3 0 1 0 7 16Z" fill="none" stroke="#000" stroke-width="2.3" stroke-linejoin="round"/></svg><div style="position:absolute;left:711.875px;top:905.45px;font-family:'Liberation Sans', sans-serif;font-size:29px;line-height:29px;color:#000;font-weight:normal;font-style:normal;letter-spacing:0.000px;white-space:pre;">L</div><div style="position:absolute;left:299px;top:947.45px;font-family:'Liberation Sans', sans-serif;font-size:29px;line-height:29px;color:#000;font-weight:normal;font-style:normal;letter-spacing:0.790px;white-space:pre;">Optimize Imports</div><svg style="position:absolute;left:657px;top:950px;overflow:visible;" width="19" height="12" viewBox="0 0 19 12"><path d="M1 10.5L9.5 2L18 10.5" fill="none" stroke="#000" stroke-width="2.8"/></svg><svg style="position:absolute;left:682px;top:951px;overflow:visible;" width="22" height="20" viewBox="0 0 22 20"><path d="M0 1.4H7L15 18.6H22M14 1.4H22" fill="none" stroke="#000" stroke-width="2.6"/></svg><div style="position:absolute;left:705.4375px;top:947.45px;font-family:'Liberation Sans', sans-serif;font-size:29px;line-height:29px;color:#000;font-weight:normal;font-style:normal;letter-spacing:0.000px;white-space:pre;">O</div><div style="position:absolute;left:299px;top:989.45px;font-family:'Liberation Sans', sans-serif;font-size:29px;line-height:29px;color:#000;font-weight:normal;font-style:normal;letter-spacing:0.375px;white-space:pre;">Delete...</div><svg style="position:absolute;left:703px;top:993px;overflow:visible;" width="24" height="20" viewBox="0 0 24 20"><path d="M1.5 1.5H16L22.5 10L16 18.5H1.5Z" fill="none" stroke="#000" stroke-width="2.6" stroke-linejoin="round"/><path d="M5.5 5.5L13 13M13 5.5L5.5 13" stroke="#000" stroke-width="2.6"/></svg><div style="position:absolute;left:299px;top:1031.45px;font-family:'Liberation Sans', sans-serif;font-size:29px;line-height:29px;color:#000;font-weight:normal;font-style:normal;letter-spacing:0.331px;white-space:pre;">Mark as Plain Text</div><svg style="position:absolute;left:256px;top:1027px;overflow:visible;" width="26" height="30" viewBox="0 0 26 30"><path d="M16 2H26V30H6V12H16Z" fill="#AFB8C0"/><rect x="0" y="0" width="14" height="14" fill="#9AA7B0"/><path d="M3 3L11 11M11 3L3 11" stroke="#3D3D3D" stroke-width="2"/><rect x="10" y="14" width="12" height="2" fill="#3D3D3D"/><rect x="10" y="18" width="12" height="2" fill="#3D3D3D"/><rect x="10" y="22" width="8" height="2" fill="#3D3D3D"/></svg><div style="position:absolute;left:250px;top:1071px;width:502px;height:42px;background:#2675BF;"></div><div style="position:absolute;left:299px;top:1079.45px;font-family:'Liberation Sans', sans-serif;font-size:29px;line-height:29px;color:#fff;font-weight:normal;font-style:normal;letter-spacing:0.724px;white-space:pre;">Run 'inflammation'</div><svg style="position:absolute;left:264px;top:1079px;overflow:visible;" width="20" height="24" viewBox="0 0 20 24"><path d="M0 0L20 12L0 24Z" fill="#5AA96B"/></svg><svg style="position:absolute;left:658px;top:1081px;overflow:visible;" width="19" height="12" viewBox="0 0 19 12"><path d="M1 10.5L9.5 2L18 10.5" fill="none" stroke="#fff" stroke-width="2.8"/></svg><svg style="position:absolute;left:683px;top:1081px;overflow:visible;" width="24" height="21" viewBox="0 0 24 21"><path d="M12 1.5L22.5 12H16.5V19.5H7.5V12H1.5Z" fill="none" stroke="#fff" stroke-width="2.6" stroke-linejoin="round"/></svg><div style="position:absolute;left:707.0625px;top:1079.45px;font-family:'Liberation Sans', sans-serif;font-size:29px;line-height:29px;color:#fff;font-weight:normal;font-style:normal;letter-spacing:0.000px;white-space:pre;">R</div><div style="position:absolute;left:299px;top:1121.45px;font-family:'Liberation Sans', sans-serif;font-size:29px;line-height:29px;color:#000;font-weight:normal;font-style:normal;letter-spacing:0.845px;white-space:pre;">Debug 'inflammation'</div><svg style="position:absolute;left:260px;top:1119px;overflow:visible;" width="24" height="29" viewBox="0 0 24 29"><path d="M6 1L12 7L18 1" fill="none" stroke="#59A869" stroke-width="3.2"/><ellipse cx="12" cy="16" rx="8.5" ry="12" fill="#59A869"/><rect x="0" y="8" width="24" height="3" fill="#59A869"/><rect x="0" y="14.5" width="24" height="3" fill="#59A869"/><rect x="0" y="21" width="24" height="3.5" fill="#59A869"/><rect x="8" y="12" width="8" height="3" fill="#F2F2F2"/><rect x="8" y="18" width="8" height="3" fill="#F2F2F2"/></svg><svg style="position:absolute;left:657px;top:1124px;overflow:visible;" width="19" height="12" viewBox="0 0 19 12"><path d="M1 10.5L9.5 2L18 10.5" fill="none" stroke="#000" stroke-width="2.8"/></svg><svg style="position:absolute;left:681px;top:1124px;overflow:visible;" width="24" height="21" viewBox="0 0 24 21"><path d="M12 1.5L22.5 12H16.5V19.5H7.5V12H1.5Z" fill="none" stroke="#000" stroke-width="2.6" stroke-linejoin="round"/></svg><div style="position:absolute;left:706.0625px;top:1121.45px;font-family:'Liberation Sans', sans-serif;font-size:29px;line-height:29px;color:#000;font-weight:normal;font-style:normal;letter-spacing:0.000px;white-space:pre;">D</div><div style="position:absolute;left:299px;top:1163.45px;font-family:'Liberation Sans', sans-serif;font-size:29px;line-height:29px;color:#000;font-weight:normal;font-style:normal;letter-spacing:0.678px;white-space:pre;">Modify Run Configuration...</div><div style="position:absolute;left:299px;top:1211.45px;font-family:'Liberation Sans', sans-serif;font-size:29px;line-height:29px;color:#000;font-weight:normal;font-style:normal;letter-spacing:0.512px;white-space:pre;">Open in Right Split</div><svg style="position:absolute;left:262px;top:1211px;overflow:visible;" width="22" height="22" viewBox="0 0 22 22"><rect x="1" y="1" width="20" height="20" fill="none" stroke="#6E6E6E" stroke-width="2"/><path d="M11 1V21" stroke="#6E6E6E" stroke-width="2"/></svg><svg style="position:absolute;left:674px;top:1214px;overflow:visible;" width="24" height="21" viewBox="0 0 24 21"><path d="M12 1.5L22.5 12H16.5V19.5H7.5V12H1.5Z" fill="none" stroke="#000" stroke-width="2.6" stroke-linejoin="round"/></svg><svg style="position:absolute;left:703px;top:1213px;overflow:visible;" width="23" height="20" viewBox="0 0 23 20"><path d="M13 1.5H21.5V11H2.5M9 4.5L2 11L9 17.5" fill="none" stroke="#000" stroke-width="2.6" stroke-linejoin="round"/></svg><div style="position:absolute;left:299px;top:1253.45px;font-family:'Liberation Sans', sans-serif;font-size:29px;line-height:29px;color:#000;font-weight:normal;font-style:normal;letter-spacing:-0.031px;white-space:pre;">Open In</div><svg style="position:absolute;left:726px;top:1258px;overflow:visible;" width="12" height="16" viewBox="0 0 12 16"><path d="M0 0L12 8L0 16Z" fill="#6E6E6E"/></svg><div style="position:absolute;left:299px;top:1301.45px;font-family:'Liberation Sans', sans-serif;font-size:29px;line-height:29px;color:#000;font-weight:normal;font-style:normal;letter-spacing:0.617px;white-space:pre;">Local History</div><svg style="position:absolute;left:726px;top:1306px;overflow:visible;" width="12" height="16" viewBox="0 0 12 16"><path d="M0 0L12 8L0 16Z" fill="#6E6E6E"/></svg><div style="position:absolute;left:299px;top:1343.45px;font-family:'Liberation Sans', sans-serif;font-size:29px;line-height:29px;color:#000;font-weight:normal;font-style:normal;letter-spacing:0.469px;white-space:pre;">Git</div><svg style="position:absolute;left:726px;top:1348px;overflow:visible;" width="12" height="16" viewBox="0 0 12 16"><path d="M0 0L12 8L0 16Z" fill="#6E6E6E"/></svg><div style="position:absolute;left:299px;top:1385.45px;font-family:'Liberation Sans', sans-serif;font-size:29px;line-height:29px;color:#000;font-weight:normal;font-style:normal;letter-spacing:0.375px;white-space:pre;">Reload from Disk</div><svg style="position:absolute;left:260px;top:1383px;overflow:visible;" width="24" height="25" viewBox="0 0 24 25"><path d="M4 10.5A8.8 8.8 0 0 1 20 7" fill="none" stroke="#6E6E6E" stroke-width="4"/><path d="M0.5 1.5V12.5H11Z" fill="#6E6E6E"/><path d="M20 14.5A8.8 8.8 0 0 1 4 18" fill="none" stroke="#6E6E6E" stroke-width="4"/><path d="M23.5 23.5V12.5H13Z" fill="#6E6E6E"/></svg><div style="position:absolute;left:299px;top:1433.45px;font-family:'Liberation Sans', sans-serif;font-size:29px;line-height:29px;color:#000;font-weight:normal;font-style:normal;letter-spacing:0.464px;white-space:pre;">Compare With...</div><svg style="position:absolute;left:258px;top:1425px;overflow:visible;" width="28" height="35" viewBox="0 0 28 35"><path d="M12.2 14.4L19.7 5.8V22Z" fill="#3C9AD9"/><rect x="19.5" y="11.6" width="8.5" height="4.4" fill="#3C9AD9"/><rect x="0" y="24" width="8.4" height="4.2" fill="#3C9AD9"/><path d="M8.2 18L16.2 26L8.2 34Z" fill="#3C9AD9"/></svg><svg style="position:absolute;left:684px;top:1436px;overflow:visible;" width="20" height="20" viewBox="0 0 20 20"><path d="M7 7V4A3 3 0 1 0 4 7H16A3 3 0 1 0 13 4V16A3 3 0 1 0 16 13H4A3 3 0 1 0 7 16Z" fill="none" stroke="#000" stroke-width="2.3" stroke-linejoin="round"/></svg><div style="position:absolute;left:707.0625px;top:1433.45px;font-family:'Liberation Sans', sans-serif;font-size:29px;line-height:29px;color:#000;font-weight:normal;font-style:normal;letter-spacing:0.000px;white-space:pre;">D</div><div style="position:absolute;left:299px;top:1481.45px;font-family:'Liberation Sans', sans-serif;font-size:29px;line-height:29px;color:#000;font-weight:normal;font-style:normal;letter-spacing:-0.120px;white-space:pre;">Add BOM</div><div style="position:absolute;left:299px;top:1529.45px;font-family:'Liberation Sans', sans-serif;font-size:29px;line-height:29px;color:#000;font-weight:normal;font-style:normal;letter-spacing:0.089px;white-space:pre;">Create Gist...</div><svg style="position:absolute;left:258px;top:1526px;overflow:visible;" width="28" height="28" viewBox="0 0 28 28"><path fill="#1B1B1B" d="M14 0.5C6.5 0.5 0.5 6.5 0.5 14C0.5 20 4.4 25 9.7 26.8C10.4 26.9 10.6 26.5 10.6 26.2V23.9C6.9 24.7 6.1 22.2 6.1 22.2C5.5 20.6 4.6 20.2 4.6 20.2C3.4 19.4 4.7 19.4 4.7 19.4C6 19.5 6.7 20.8 6.7 20.8C7.9 22.8 9.9 22.2 10.7 21.9C10.8 21 11.2 20.4 11.5 20.1C8.5 19.8 5.4 18.6 5.4 13.4C5.4 11.9 5.9 10.7 6.8 9.8C6.7 9.4 6.2 8 6.9 6.2C6.9 6.2 8.1 5.8 10.6 7.6C11.7 7.3 12.9 7.1 14 7.1C15.1 7.1 16.3 7.3 17.4 7.6C19.9 5.8 21.1 6.2 21.1 6.2C21.8 8 21.4 9.4 21.2 9.8C22.1 10.7 22.6 11.9 22.6 13.4C22.6 18.6 19.5 19.8 16.5 20.1C17 20.5 17.4 21.3 17.4 22.5V26.2C17.4 26.5 17.6 26.9 18.3 26.8C23.6 25 27.5 20 27.5 14C27.5 6.5 21.5 0.5 14 0.5Z"/></svg></body></html>
